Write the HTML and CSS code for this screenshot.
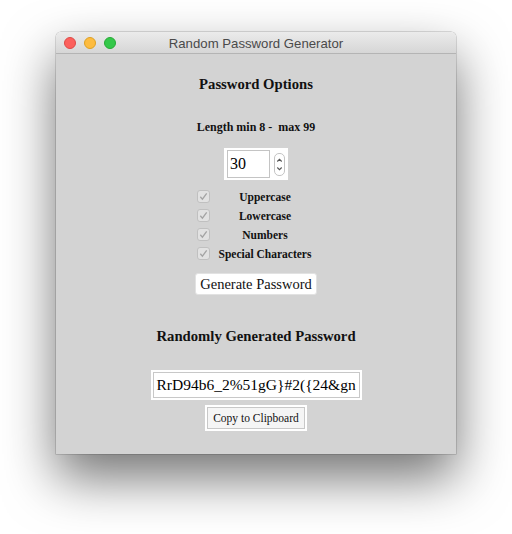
FILE: index.html
```html
<!DOCTYPE html>
<html>
<head>
<meta charset="utf-8">
<link rel="stylesheet" href="styles.css">
</head>
<body>
<div class="window">
  <div class="titlebar">
    <div class="lights">
      <span class="light red"></span>
      <span class="light yellow"></span>
      <span class="light green"></span>
    </div>
    <div class="title">Random Password Generator</div>
  </div>
  <div class="content">
    <div class="heading first">Password Options</div>
    <div class="length">Length min 8 -  max 99</div>
    <div class="numbox">
      <div class="numfield">30</div>
      <div class="stepper">
        <svg width="11" height="23" viewBox="0 0 11 23">
          <rect x="0.5" y="0.5" width="10" height="22" rx="4.5" fill="#fff" stroke="#c4c4c4"/>
          <path d="M3.3 8.5 L5.5 6.3 L7.7 8.5" fill="none" stroke="#555" stroke-width="1.1"/>
          <path d="M3.3 14.5 L5.5 16.7 L7.7 14.5" fill="none" stroke="#555" stroke-width="1.1"/>
        </svg>
      </div>
    </div>
    <div class="checks">
      <span class="cb"><svg width="9" height="9" viewBox="0 0 9 9"><path d="M1.3 4.8 L3.4 7.2 L7.7 1.3" fill="none" stroke="#a4a4a4" stroke-width="1.3"/></svg></span>
      <span class="lbl">Uppercase</span>
      <span class="cb"><svg width="9" height="9" viewBox="0 0 9 9"><path d="M1.3 4.8 L3.4 7.2 L7.7 1.3" fill="none" stroke="#a4a4a4" stroke-width="1.3"/></svg></span>
      <span class="lbl">Lowercase</span>
      <span class="cb"><svg width="9" height="9" viewBox="0 0 9 9"><path d="M1.3 4.8 L3.4 7.2 L7.7 1.3" fill="none" stroke="#a4a4a4" stroke-width="1.3"/></svg></span>
      <span class="lbl">Numbers</span>
      <span class="cb"><svg width="9" height="9" viewBox="0 0 9 9"><path d="M1.3 4.8 L3.4 7.2 L7.7 1.3" fill="none" stroke="#a4a4a4" stroke-width="1.3"/></svg></span>
      <span class="lbl">Special Characters</span>
    </div>
    <div class="genbtn">Generate Password</div>
    <div class="heading second">Randomly Generated Password</div>
    <div class="pwbox"><div class="pwfield">RrD94b6_2%51gG}#2({24&amp;gn</div></div>
    <div class="copybtn"><div class="copyinner">Copy to Clipboard</div></div>
  </div>
</div>
</body>
</html>
```
FILE: styles.css
```css
html, body {
  margin: 0;
  padding: 0;
  background: #ffffff;
}
body {
  width: 512px;
  height: 534px;
  overflow: hidden;
}
.window {
  margin: 32px 0 0 56px;
  width: 400px;
  height: 422px;
  border-radius: 5px 5px 0 0;
  box-shadow: 0 24px 52px rgba(0, 0, 0, 0.55), 0 0 0 0.5px rgba(0, 0, 0, 0.25);
  display: flex;
  flex-direction: column;
}
.titlebar {
  height: 21px;
  border-radius: 5px 5px 0 0;
  background: linear-gradient(#ebebeb, #d6d6d6);
  border-bottom: 1px solid #b4b4b4;
  position: relative;
  display: flex;
  align-items: center;
  justify-content: center;
}
.lights {
  position: absolute;
  left: 8px;
  top: 5px;
  display: flex;
  gap: 8px;
}
.light {
  width: 12px;
  height: 12px;
  border-radius: 50%;
  box-sizing: border-box;
}
.red { background: #fc605c; border: 0.5px solid #de4a46; }
.yellow { background: #fdbc40; border: 0.5px solid #dea123; }
.green { background: #34c84a; border: 0.5px solid #27aa35; }
.title {
  font-family: "Liberation Sans", Arial, sans-serif;
  font-size: 13.2px;
  color: #4a4a4a;
  padding-top: 1px;
}
.content {
  flex: 1;
  background: #d3d3d3;
  display: flex;
  flex-direction: column;
  align-items: center;
  font-family: "Liberation Serif", "Times New Roman", serif;
  color: #111;
}
.heading {
  font-weight: bold;
  font-size: 14.7px;
  line-height: 18px;
}
.heading.first { margin-top: 21px; }
.length {
  margin-top: 27px;
  font-weight: bold;
  font-size: 12px;
  line-height: 14px;
  white-space: pre;
}
.numbox {
  margin-top: 14px;
  width: 64px;
  height: 32px;
  background: #fff;
  box-sizing: border-box;
  padding: 2px 3px;
  display: flex;
  align-items: center;
  gap: 4px;
}
.numfield {
  width: 45px;
  height: 28px;
  box-sizing: border-box;
  border: 1px solid #c4c4c4;
  font-size: 16px;
  line-height: 26px;
  padding-left: 2px;
  color: #000;
}
.stepper {
  display: flex;
  align-items: center;
}
.stepper svg { display: block; }
.checks {
  margin-top: 7px;
  display: grid;
  grid-template-columns: 13px 100px;
  column-gap: 5px;
  grid-auto-rows: 19px;
  align-items: center;
}
.cb {
  width: 13px;
  height: 13px;
  box-sizing: border-box;
  border: 1px solid #c0c0c0;
  border-radius: 3px;
  background: #e2e2e2;
  display: flex;
  align-items: center;
  justify-content: center;
}
.cb svg { display: block; }
.lbl {
  text-align: center;
  font-weight: bold;
  font-size: 11.5px;
  white-space: nowrap;
}
.genbtn {
  margin-top: 10px;
  width: 122px;
  height: 22px;
  box-sizing: border-box;
  background: #fff;
  border: 1px solid #e2e2e2;
  border-radius: 3px;
  font-size: 14.5px;
  line-height: 20px;
  text-align: center;
  color: #111;
}
.heading.second { margin-top: 32px; }
.pwbox {
  margin-top: 25px;
  width: 211px;
  height: 30px;
  background: #fff;
  box-sizing: border-box;
  padding: 2px;
}
.pwfield {
  height: 26px;
  box-sizing: border-box;
  border: 1px solid #c8c8c8;
  font-size: 15.5px;
  line-height: 24px;
  padding-left: 3px;
  white-space: nowrap;
  overflow: hidden;
  color: #000;
}
.copybtn {
  margin-top: 5px;
  width: 102px;
  height: 26px;
  background: #fff;
  box-sizing: border-box;
  padding: 2px;
}
.copyinner {
  height: 22px;
  box-sizing: border-box;
  border: 1px solid #c8c8c8;
  background: #f5f5f5;
  font-size: 11.5px;
  line-height: 20px;
  text-align: center;
  color: #111;
}
```
